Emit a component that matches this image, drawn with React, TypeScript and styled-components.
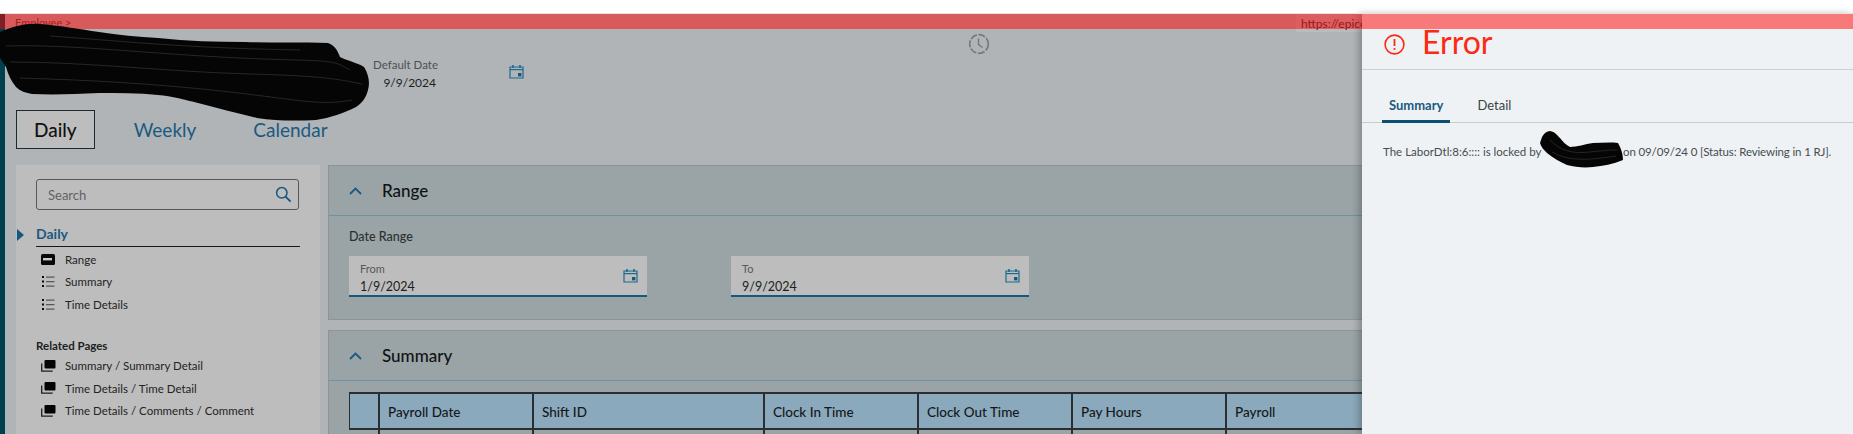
import React from "react";
import styled, { createGlobalStyle } from "styled-components";

const GlobalStyle = createGlobalStyle`
  html, body {
    margin: 0;
    padding: 0;
    background: #ffffff;
  }
  * {
    box-sizing: border-box;
  }
`;

const Page = styled.div`
  position: relative;
  width: 1853px;
  height: 434px;
  overflow: hidden;
  padding-top: 14px;
  background: #ffffff;
  font-family: "Lato", "Noto Sans", sans-serif;
  color: #1b1f22;
`;

const ErrorBar = styled.div`
  position: absolute;
  left: 0;
  right: 0;
  top: 14px;
  height: 15px;
  z-index: 4;
  background: rgba(255, 0, 0, 0.5);
  box-shadow: 0 -1px 0 #e2e2e2;
`;

const Shell = styled.div`
  display: flex;
  height: 420px;
  background: #b0b4b7;
`;

const Strip = styled.div`
  flex: none;
  width: 5px;
  background: #003f4e;
`;

const Content = styled.div`
  flex: 1;
  min-width: 0;
`;

const Breadcrumb = styled.div`
  height: 15px;
  padding-left: 10px;
  font-size: 11px;
  line-height: 17px;
  color: #444444;
`;

const UrlHint = styled.div`
  position: absolute;
  left: 1296px;
  top: 14px;
  width: 120px;
  height: 18px;
  padding: 2px 0 0 5px;
  z-index: 1;
  background: #b9bcbf;
  font-size: 12px;
  line-height: 15px;
  color: #2c3033;
`;

const Header = styled.div`
  display: flex;
  align-items: flex-start;
  height: 81px;
  padding: 4px 0 0 368px;
`;

const DefaultDate = styled.div`
  width: 63px;
  margin-top: 23px;
  text-align: right;
  white-space: nowrap;
`;

const DefaultLabel = styled.div`
  height: 18px;
  font-size: 11.5px;
  line-height: 18px;
  color: #4c5154;
`;

const DefaultValue = styled.div`
  height: 18px;
  font-size: 12px;
  line-height: 18px;
`;

const HeaderCalendar = styled.div`
  margin: 31px 0 0 73px;
  line-height: 0;
`;

const HeaderClock = styled.div`
  margin-left: 444px;
  line-height: 0;
`;

const TabRow = styled.div`
  display: flex;
  gap: 21px;
  height: 39px;
  margin: 0 0 16px 11px;
`;

const PageTab = styled.div<{ $active?: boolean }>`
  height: 39px;
  padding: 0 17px;
  font-size: 19px;
  line-height: 37px;
  font-weight: ${(p) => (p.$active ? 500 : 400)};
  color: ${(p) => (p.$active ? "#111111" : "#1b5a80")};
  border: 1px solid ${(p) => (p.$active ? "#1c2a30" : "transparent")};
  background: ${(p) => (p.$active ? "#bdbdbd" : "transparent")};
`;

const Columns = styled.div`
  display: flex;
  gap: 8px;
  padding-left: 11px;
`;

const NavPanel = styled.div`
  flex: none;
  width: 304px;
  height: 269px;
  padding: 14px 20px 0;
  background: #bdbdbd;
`;

const SearchBox = styled.div`
  display: flex;
  align-items: center;
  justify-content: space-between;
  width: 263px;
  height: 31px;
  padding: 0 6px 0 11px;
  border: 1px solid #55595c;
  border-radius: 3px;
  font-size: 13px;
  color: #5f6467;
`;

const NavHeading = styled.div`
  position: relative;
  height: 24px;
  width: 264px;
  margin-top: 13px;
  border-bottom: 1px solid #16191b;
  font-size: 14px;
  font-weight: 700;
  line-height: 22px;
  color: #1b5a80;
`;

const Pointer = styled.span`
  position: absolute;
  left: -19px;
  top: 6px;
  border-style: solid;
  border-width: 6px 0 6px 7px;
  border-color: transparent transparent transparent #145a80;
`;

const NavList = styled.div`
  margin-top: 1px;
`;

const NavItem = styled.div`
  display: flex;
  align-items: center;
  height: 22.5px;
  font-size: 11.5px;
  color: #1f2326;
`;

const NavIcon = styled.span`
  display: flex;
  flex: none;
  width: 29px;
  padding-left: 5px;
`;

const RelatedTitle = styled.div`
  height: 18px;
  margin-top: 21px;
  font-size: 11.5px;
  font-weight: 700;
  line-height: 18px;
`;

const Main = styled.div`
  flex: 1;
  min-width: 0;
  padding-right: 12px;
`;

const Card = styled.section<{ $height: number }>`
  height: ${(p) => p.$height}px;
  margin-bottom: 10px;
  border: 1px solid #8e9496;
  background: #9aa3a5;
  overflow: hidden;
`;

const CardHeader = styled.div`
  display: flex;
  align-items: center;
  gap: 20px;
  height: 50px;
  padding: 0 0 0 20px;
  border-bottom: 1px solid #6f939e;
  font-size: 17px;
  font-weight: 500;
  color: #101214;
`;

const CardBody = styled.div`
  padding: 12px 0 0 20px;
`;

const GroupLabel = styled.div`
  height: 18px;
  font-size: 12.5px;
  font-weight: 500;
  line-height: 18px;
  color: #2b2f32;
`;

const FieldRow = styled.div`
  display: flex;
  gap: 84px;
  margin-top: 10px;
`;

const DateField = styled.div`
  display: flex;
  justify-content: space-between;
  width: 298px;
  height: 41px;
  padding: 4px 9px 0 11px;
  background: #bdbdbd;
  border-bottom: 2px solid #155a7e;
`;

const FieldLabel = styled.div`
  height: 18px;
  font-size: 11px;
  line-height: 17px;
  color: #54595c;
`;

const FieldValue = styled.div`
  height: 17px;
  font-size: 12.5px;
  line-height: 17px;
`;

const FieldIcon = styled.div`
  margin-top: 8px;
  line-height: 0;
`;

const TableWrap = styled.div`
  padding: 11px 0 0 20px;
`;

const TableRow = styled.div`
  display: flex;
`;

const HeadCell = styled.div<{ $width: number }>`
  flex: none;
  width: ${(p) => p.$width}px;
  height: 38px;
  padding-left: 8px;
  background: #8ba9bc;
  border: 2px solid #2a2e31;
  border-left-width: ${(p) => (p.$width === 31 ? 1 : 0)}px;
  font-size: 13.5px;
  font-weight: 500;
  line-height: 37px;
  white-space: nowrap;
  color: #14181b;
`;

const BodyCell = styled.div<{ $width: number }>`
  flex: none;
  width: ${(p) => p.$width}px;
  height: 10px;
  border-right: 2px solid #2a2e31;
`;

const Drawer = styled.aside`
  position: absolute;
  left: 1362px;
  right: 0;
  top: 14px;
  bottom: 0;
  z-index: 2;
  background: #eef2f5;
  box-shadow: -3px 0 7px rgba(40, 45, 50, 0.35);
`;

const DrawerHeader = styled.div`
  display: flex;
  align-items: center;
  gap: 17px;
  height: 56px;
  padding: 5px 0 0 22px;
  border-bottom: 1px solid #ccd0d4;
  font-size: 32px;
  color: #fb2a12;
`;

const ErrorTitle = styled.span`
  margin-top: -5px;
`;

const DrawerTabs = styled.div`
  display: flex;
  gap: 20px;
  height: 53px;
  padding: 20px 0 0 20px;
  border-bottom: 1px solid #c9cdd1;
`;

const DrawerTab = styled.div<{ $active?: boolean }>`
  height: 33px;
  padding: 0 7px;
  font-size: 13px;
  font-weight: ${(p) => (p.$active ? 700 : 400)};
  line-height: 30px;
  color: ${(p) => (p.$active ? "#1b5a80" : "#3a3f43")};
  border-bottom: ${(p) => (p.$active ? "3px solid #0b4f75" : "none")};
`;

const Message = styled.div`
  margin-top: 20px;
  padding-left: 21px;
  font-size: 11.5px;
  line-height: 18px;
  white-space: nowrap;
  color: #474c50;
`;

const HiddenName = styled.span`
  display: inline-block;
  width: 76px;
`;

const MessageTail = styled.span`
  letter-spacing: -0.14px;
`;

const Redaction = styled.svg`
  position: absolute;
  left: 0;
  top: 0;
  z-index: 5;
  pointer-events: none;
`;

const CalendarIcon = ({ size = 15 }: { size?: number }) => (
  <svg width={size} height={size} viewBox="0 0 15 15" fill="none">
    <path d="M1 3h13v11H1z" stroke="#1b6a90" strokeWidth="1.2" />
    <path d="M1 5.6h13" stroke="#1b6a90" strokeWidth="1.2" />
    <path d="M4 1v3M11 1v3" stroke="#1b6a90" strokeWidth="1.6" />
    <rect x="9" y="9" width="3.4" height="3.4" fill="#14587c" />
  </svg>
);

const ChevronUp = () => (
  <svg width="13" height="8" viewBox="0 0 13 8" fill="none">
    <path d="M1 7l5.5-5.5L12 7" stroke="#1b5a80" strokeWidth="1.8" />
  </svg>
);

const ClockIcon = () => (
  <svg width="22" height="22" viewBox="0 0 22 22" fill="none">
    <circle cx="11" cy="11" r="9.3" stroke="#767b7e" strokeWidth="1.7" strokeDasharray="7 1.6" />
    <path d="M10.5 5.5v6l4 3" stroke="#767b7e" strokeWidth="1.5" />
  </svg>
);

const SearchIcon = () => (
  <svg width="17" height="17" viewBox="0 0 17 17" fill="none">
    <circle cx="6.8" cy="6.8" r="5.2" stroke="#14587c" strokeWidth="1.5" />
    <path d="M10.6 10.6l5 5" stroke="#14587c" strokeWidth="1.8" />
  </svg>
);

const RangeIcon = () => (
  <svg width="14" height="11" viewBox="0 0 14 11">
    <rect width="14" height="11" rx="1.5" fill="#08090a" />
    <rect x="2" y="4" width="9" height="2.4" fill="#c9c9c9" />
  </svg>
);

const ListIcon = () => (
  <svg width="14" height="11" viewBox="0 0 14 11">
    <path d="M1 0h2v2H1zM1 4.5h2v2H1zM1 9h2v2H1z" fill="#08090a" />
    <path d="M5 .4h8.5v1.4H5zM5 4.9h8.5v1.4H5zM5 9.4h8.5v1.4H5z" fill="#55585b" />
  </svg>
);

const PagesIcon = () => (
  <svg width="15" height="12" viewBox="0 0 15 12" fill="none">
    <rect x="3.5" y="0" width="11" height="8.6" rx="1" fill="#050505" />
    <path d="M.7 3.5v7.7h11" stroke="#1d1f21" strokeWidth="1.3" />
  </svg>
);

const ErrorIcon = () => (
  <svg width="21" height="21" viewBox="0 0 21 21" fill="none">
    <circle cx="10.5" cy="10.5" r="9.4" stroke="#fb2a12" strokeWidth="1.6" />
    <path d="M10.5 5v7" stroke="#fb2a12" strokeWidth="1.8" />
    <circle cx="10.5" cy="15" r="1.1" fill="#fb2a12" />
  </svg>
);

const daily = [
  { label: "Range", icon: <RangeIcon /> },
  { label: "Summary", icon: <ListIcon /> },
  { label: "Time Details", icon: <ListIcon /> },
];

const related = [
  "Summary / Summary Detail",
  "Time Details / Time Detail",
  "Time Details / Comments / Comment",
];

const tableCols = [
  { title: "", width: 31 },
  { title: "Payroll Date", width: 154 },
  { title: "Shift ID", width: 231 },
  { title: "Clock In Time", width: 154 },
  { title: "Clock Out Time", width: 154 },
  { title: "Pay Hours", width: 154 },
  { title: "Payroll", width: 154 },
];

const blobLarge =
  "M0 32C14 26 26 23 40 24C62 26 80 29 99 32C118 35 138 37 158 38C188 41 216 42 245 42C275 43 302 42 328 43C336 46 338 52 340 57C348 61 358 63 364 67C369 75 370 83 368 90C366 98 362 103 356 107C344 113 330 118 316 120C296 121 276 121 257 118C236 113 218 108 198 103C186 100 172 96 158 95C138 93 118 93 99 93C76 94 54 95 32 94C26 93 20 91 16 87C11 81 8 74 6 67C4 64 2 61 0 58Z";

const blobSmall =
  "M1542 137C1544 133 1547 131 1550 131C1555 132 1557 135 1560 138C1563 142 1566 145 1570 147C1577 147 1585 144 1593 143C1601 143 1610 142 1618 143C1621 148 1623 154 1623 160C1613 164 1603 166 1593 167C1584 168 1575 167 1567 165C1560 162 1553 158 1547 153C1544 150 1541 147 1540 143Z";

const App = () => (
  <Page>
    <GlobalStyle />
    <ErrorBar />
    <UrlHint>https://epicor</UrlHint>
    <Shell>
      <Strip />
      <Content>
        <Breadcrumb>Employee &gt;</Breadcrumb>
        <Header>
          <DefaultDate>
            <DefaultLabel>Default Date</DefaultLabel>
            <DefaultValue>9/9/2024</DefaultValue>
          </DefaultDate>
          <HeaderCalendar>
            <CalendarIcon />
          </HeaderCalendar>
          <HeaderClock>
            <ClockIcon />
          </HeaderClock>
        </Header>
        <TabRow>
          <PageTab $active>Daily</PageTab>
          <PageTab>Weekly</PageTab>
          <PageTab>Calendar</PageTab>
        </TabRow>
        <Columns>
          <NavPanel>
            <SearchBox>
              Search
              <SearchIcon />
            </SearchBox>
            <NavHeading>
              <Pointer />
              Daily
            </NavHeading>
            <NavList>
              {daily.map((item) => (
                <NavItem key={item.label}>
                  <NavIcon>{item.icon}</NavIcon>
                  {item.label}
                </NavItem>
              ))}
            </NavList>
            <RelatedTitle>Related Pages</RelatedTitle>
            {related.map((label) => (
              <NavItem key={label}>
                <NavIcon>
                  <PagesIcon />
                </NavIcon>
                {label}
              </NavItem>
            ))}
          </NavPanel>
          <Main>
            <Card $height={155}>
              <CardHeader>
                <ChevronUp />
                Range
              </CardHeader>
              <CardBody>
                <GroupLabel>Date Range</GroupLabel>
                <FieldRow>
                  <DateField>
                    <div>
                      <FieldLabel>From</FieldLabel>
                      <FieldValue>1/9/2024</FieldValue>
                    </div>
                    <FieldIcon>
                      <CalendarIcon />
                    </FieldIcon>
                  </DateField>
                  <DateField>
                    <div>
                      <FieldLabel>To</FieldLabel>
                      <FieldValue>9/9/2024</FieldValue>
                    </div>
                    <FieldIcon>
                      <CalendarIcon />
                    </FieldIcon>
                  </DateField>
                </FieldRow>
              </CardBody>
            </Card>
            <Card $height={120}>
              <CardHeader>
                <ChevronUp />
                Summary
              </CardHeader>
              <TableWrap>
                <TableRow>
                  {tableCols.map((col, i) => (
                    <HeadCell key={i} $width={col.width}>
                      {col.title}
                    </HeadCell>
                  ))}
                </TableRow>
                <TableRow>
                  {tableCols.map((col, i) => (
                    <BodyCell key={i} $width={col.width} />
                  ))}
                </TableRow>
              </TableWrap>
            </Card>
          </Main>
        </Columns>
      </Content>
    </Shell>
    <Drawer>
      <DrawerHeader>
        <ErrorIcon />
        <ErrorTitle>Error</ErrorTitle>
      </DrawerHeader>
      <DrawerTabs>
        <DrawerTab $active>Summary</DrawerTab>
        <DrawerTab>Detail</DrawerTab>
      </DrawerTabs>
      <Message>
        The LaborDtl:8:6:::: is locked by <HiddenName /> <MessageTail>on 09/09/24 0 [Status: Reviewing in 1 RJ].</MessageTail>
      </Message>
    </Drawer>
    <Redaction width="1853" height="434" viewBox="0 0 1853 434">
      <path d={blobLarge} fill="#050505" />
      <path d={blobSmall} fill="#050505" />
      <g fill="none" stroke="#2f2f2f" strokeWidth="0.8">
        <path d="M6 46C70 44 150 54 240 58S330 58 350 70" />
        <path d="M10 62C90 62 170 72 250 74S340 80 362 84" />
        <path d="M20 78C90 80 160 84 230 92S320 106 352 100" />
        <path d="M50 36C110 40 180 48 300 50" />
        <path d="M1550 140C1560 150 1570 154 1590 152S1610 150 1618 150" />
        <path d="M1552 152C1570 162 1590 160 1616 156" />
      </g>
    </Redaction>
  </Page>
);

export default App;
